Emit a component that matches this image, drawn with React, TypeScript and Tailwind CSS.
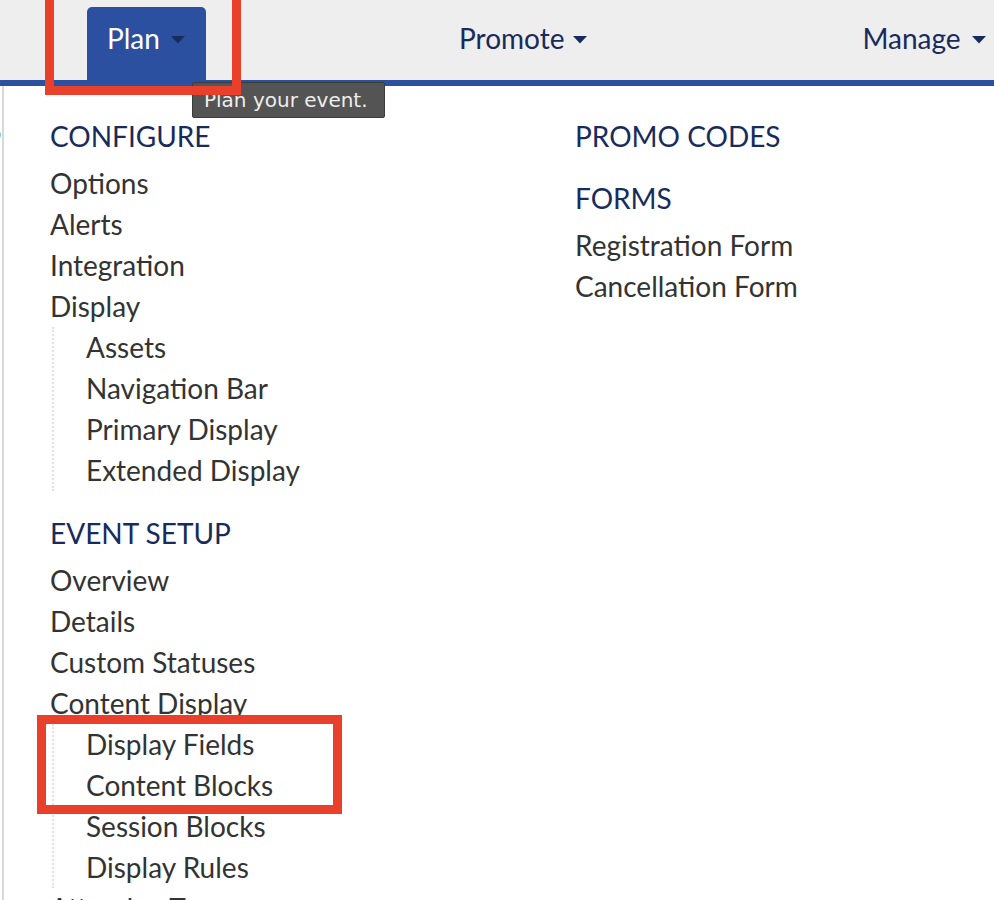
import React from "react";

const Caret = ({ color, gap }: { color: string; gap: string }) => (
  <svg width="14" height="8" viewBox="0 0 14 8" className={`${gap} mt-[4px]`}>
    <path d="M0 0 L14 0 L7 7.5 Z" fill={color} />
  </svg>
);

const Heading = ({ children, className = "" }: { children: React.ReactNode; className?: string }) => (
  <div className={`text-[#172b5c] uppercase leading-[41px] mb-[6px] ${className}`}>{children}</div>
);

const Item = ({ children }: { children: React.ReactNode }) => (
  <div className="text-[#333333] leading-[41px] whitespace-nowrap">{children}</div>
);

const SubList = ({ items }: { items: string[] }) => (
  <div className="ml-[2px] border-l-2 border-dotted border-[#e2e2e2] pl-[32px]">
    {items.map((t) => (
      <Item key={t}>{t}</Item>
    ))}
  </div>
);

export default function App() {
  return (
    <div
      className="relative w-[994px] h-[900px] overflow-hidden bg-white text-[28px]"
      style={{ fontFamily: "Lato, 'Open Sans', sans-serif" }}
    >
      {/* Top nav */}
      <div className="flex h-[86px] items-end border-b-[6px] border-[#2b50a0] bg-[#eeeeee] pl-[87px]">
        <div className="flex h-[73px] w-[119px] items-center rounded-t-[5px] bg-[#2b50a0] pl-[20px] pb-[11px]">
          <span className="leading-[30px] text-white">Plan</span>
          <Caret color="#172b5c" gap="ml-[11px]" />
        </div>
        <div className="ml-[253px] flex h-[73px] items-center pb-[11px]">
          <span className="leading-[30px] text-[#172b5c]">Promote</span>
          <Caret color="#172b5c" gap="ml-[9px]" />
        </div>
        <div className="ml-[275px] flex h-[73px] items-center pb-[11px]">
          <span className="leading-[30px] text-[#172b5c]">Manage</span>
          <Caret color="#172b5c" gap="ml-[11px]" />
        </div>
      </div>

      {/* Body */}
      <div className="relative flex h-[814px]">
        <div className="w-[4px] shrink-0 border-r-2 border-[#d8d8d8]" />
        <div className="w-[571px] shrink-0 pl-[46px] pt-[30px]">
          <Heading>Configure</Heading>
          <Item>Options</Item>
          <Item>Alerts</Item>
          <Item>Integration</Item>
          <Item>Display</Item>
          <SubList items={["Assets", "Navigation Bar", "Primary Display", "Extended Display"]} />
          <Heading className="mt-[22px]">Event Setup</Heading>
          <Item>Overview</Item>
          <Item>Details</Item>
          <Item>Custom Statuses</Item>
          <Item>Content Display</Item>
          <SubList items={["Display Fields", "Content Blocks", "Session Blocks", "Display Rules"]} />
          <Item>Attendee Types</Item>
        </div>
        <div className="pt-[30px]">
          <Heading>Promo Codes</Heading>
          <Heading className="mt-[21px]">Forms</Heading>
          <Item>Registration Form</Item>
          <Item>Cancellation Form</Item>
        </div>
        <span className="absolute left-[-10px] top-[31px] text-[20px] text-[#555]">p</span>
      </div>

      {/* Tooltip */}
      <div
        className="absolute left-[192px] top-[82px] flex h-[36px] w-[193px] items-center rounded-[2px] border border-[#3c3c3c] bg-[#545454] pl-[11px] text-[20px] text-[#eeeeee] whitespace-nowrap"
        style={{ fontFamily: "'DejaVu Sans', 'Open Sans', sans-serif" }}
      >
        Plan your event.
      </div>

      {/* Annotation boxes */}
      <div className="pointer-events-none absolute left-[45px] top-[-10px] h-[105px] w-[196px] border-[9px] border-[#e8402a]" />
      <div className="pointer-events-none absolute left-[37px] top-[715px] h-[99px] w-[305px] border-[9px] border-[#e8402a]" />
    </div>
  );
}
